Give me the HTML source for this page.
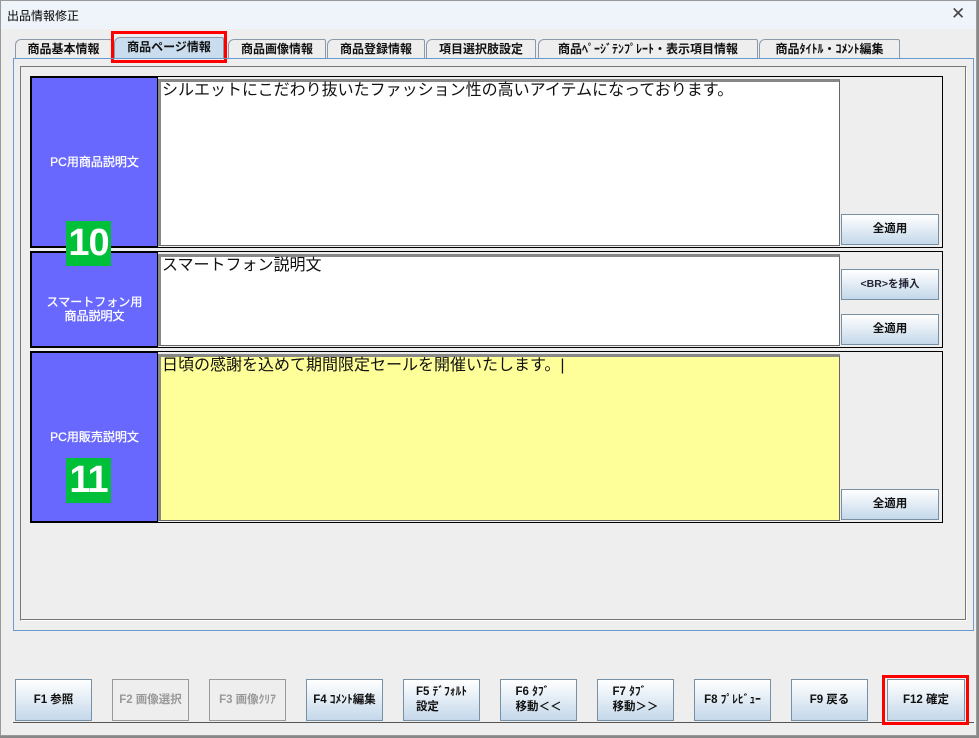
<!DOCTYPE html>
<html><head><meta charset="utf-8">
<style>
*{box-sizing:border-box;margin:0;padding:0}
body{width:979px;height:738px;background:#888;font-family:"Liberation Sans","Noto Sans CJK JP",sans-serif;position:relative;overflow:hidden}
.win{position:absolute;left:0;top:0;width:977px;height:736px;background:#eeeeee;border:1px solid #999}
.title{position:absolute;left:0;top:0;width:975px;height:28px;background:#eef4fa}
.title span{position:absolute;left:6px;top:6px;font-size:12px;color:#000}
.title .x{left:950px;top:3px;font-size:17px;color:#444;font-weight:normal;font-family:"DejaVu Sans",sans-serif}
.tab{position:absolute;top:38px;height:20px;border:1px solid #8a9aaa;border-bottom:none;background:#eeeeee;font-size:12px;font-weight:bold;text-align:center;line-height:18px;color:#111;white-space:nowrap;border-radius:6px 2px 0 0}
.tab.sel{background:#c9ddef;top:36px;height:22px}
.abs{position:absolute}
.lbl{position:absolute;background:#6868ff;border:1px solid #000;color:#fff;font-size:12px;text-align:center;display:flex;align-items:center;justify-content:center;line-height:14px;-webkit-text-stroke:0.3px #fff}
.ta{position:absolute;background:#fff;border:1px solid #666;border-top:3px solid #888;border-left:3px solid #888;font-size:16px;padding:0 1px;line-height:18px;color:#111}
.btn{position:absolute;border:1px solid #7890a4;background:linear-gradient(#ffffff,#c4d8ea);font-size:11.5px;font-weight:bold;color:#111;display:flex;align-items:center;justify-content:center;text-align:left;line-height:15px}
.btn.dis{background:#eeeeee;color:#999;border-color:#999}
.badge{position:absolute;width:45px;height:45px;background:#00c03a;color:#fff;font-size:38px;font-weight:bold;text-align:center;line-height:45px;letter-spacing:-1px}
.red{position:absolute;border:3px solid #f00}
</style></head><body>
<div class="win">
<div class="title"><span>出品情報修正</span><span class="x">✕</span></div>
<div class="tab" style="left:14px;width:97px">商品基本情報</div>
<div class="tab sel" style="left:113px;width:110px">商品ページ情報</div>
<div class="tab" style="left:227px;width:98px">商品画像情報</div>
<div class="tab" style="left:326px;width:98px">商品登録情報</div>
<div class="tab" style="left:425px;width:110px">項目選択肢設定</div>
<div class="tab" style="left:537px;width:220px">商品ﾍﾟｰｼﾞﾃﾝﾌﾟﾚｰﾄ・表示項目情報</div>
<div class="tab" style="left:758px;width:141px">商品ﾀｲﾄﾙ・ｺﾒﾝﾄ編集</div>
<div class="red" style="left:110px;top:30px;width:116px;height:32px"></div>
<div class="abs" style="left:12px;top:57px;width:961px;height:573px;border:1px solid #6a9ad0"></div>
<div class="abs" style="left:19px;top:65px;width:947px;height:555px;border:1px solid #777;border-right-color:#fff;border-bottom-color:#fff;box-shadow:inset -1px -1px 0 #777"></div>

<div class="abs" style="left:29px;top:75px;width:913px;height:172px;border:1px solid #000"></div>
<div class="lbl" style="left:30px;top:76px;width:127px;height:170px">PC用商品説明文</div>
<div class="ta" style="left:157px;top:78px;width:682px;height:167px">シルエットにこだわり抜いたファッション性の高いアイテムになっております。</div>
<div class="btn" style="left:840px;top:213px;width:98px;height:31px">全適用</div>

<div class="abs" style="left:29px;top:250px;width:913px;height:97px;border:1px solid #000"></div>
<div class="lbl" style="left:30px;top:251px;width:127px;height:95px;padding-top:18px">スマートフォン用<br>商品説明文</div>
<div class="ta" style="left:157px;top:253px;width:682px;height:92px">スマートフォン説明文</div>
<div class="btn" style="left:840px;top:268px;width:98px;height:31px;font-size:10.5px"><span style="color:#223">&lt;BR&gt;を挿入</span></div>
<div class="btn" style="left:840px;top:313px;width:98px;height:31px">全適用</div>

<div class="abs" style="left:29px;top:350px;width:913px;height:172px;border:1px solid #000"></div>
<div class="lbl" style="left:30px;top:351px;width:127px;height:170px">PC用販売説明文</div>
<div class="ta" style="left:157px;top:353px;width:682px;height:167px;background:#ffff99">日頃の感謝を込めて期間限定セールを開催いたします。|</div>
<div class="btn" style="left:840px;top:488px;width:98px;height:31px">全適用</div>

<div class="badge" style="left:65px;top:220px">10</div>
<div class="badge" style="left:65px;top:457px">11</div>

<div class="abs" style="left:12px;top:721px;width:961px;height:1px;background:#555"></div>
<div class="btn" style="left:14px;top:678px;width:77px;height:42px">F1 参照</div>
<div class="btn dis" style="left:111px;top:678px;width:77px;height:42px">F2 画像選択</div>
<div class="btn dis" style="left:208px;top:678px;width:77px;height:42px">F3 画像ｸﾘｱ</div>
<div class="btn" style="left:305px;top:678px;width:77px;height:42px">F4 ｺﾒﾝﾄ編集</div>
<div class="btn" style="left:402px;top:678px;width:77px;height:42px">F5 ﾃﾞﾌｫﾙﾄ<br>設定</div>
<div class="btn" style="left:499px;top:678px;width:77px;height:42px">F6 ﾀﾌﾞ<br>移動＜＜</div>
<div class="btn" style="left:596px;top:678px;width:77px;height:42px">F7 ﾀﾌﾞ<br>移動＞＞</div>
<div class="btn" style="left:693px;top:678px;width:77px;height:42px">F8 ﾌﾟﾚﾋﾞｭｰ</div>
<div class="btn" style="left:790px;top:678px;width:77px;height:42px">F9 戻る</div>
<div class="btn" style="left:886px;top:678px;width:78px;height:42px">F12 確定</div>
<div class="red" style="left:881px;top:674px;width:87px;height:50px"></div>
</div>
</body></html>
